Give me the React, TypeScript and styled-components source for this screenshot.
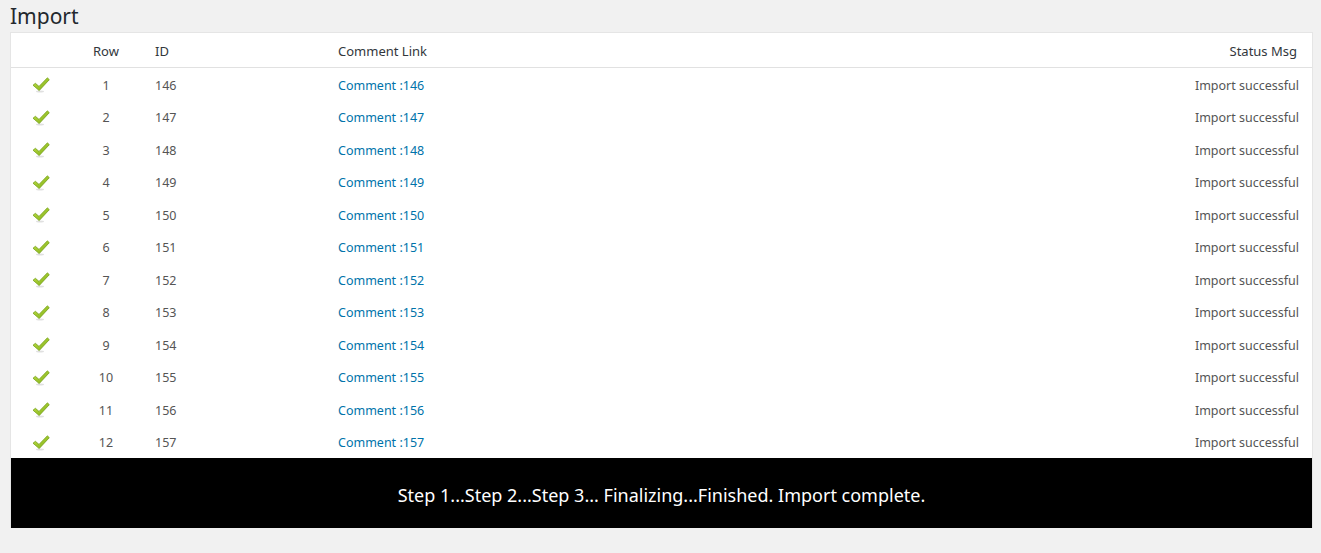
import { FC } from "react";
import styled, { createGlobalStyle } from "styled-components";

const GlobalStyle = createGlobalStyle`
  html, body {
    margin: 0;
    padding: 0;
    background: #f1f1f1;
    font-family: "Noto Sans", "Open Sans", sans-serif;
  }
`;

const rows = Array.from({ length: 12 }, (_, i) => ({ row: i + 1, id: 146 + i }));

const CheckIcon: FC = () => (
  <svg width="18" height="16" viewBox="0 0 18 16">
    <defs>
      <linearGradient id="chk" x1="0" y1="0" x2="1" y2="1">
        <stop offset="0" stopColor="#c4e34a" />
        <stop offset="1" stopColor="#7aab12" />
      </linearGradient>
    </defs>
    <ellipse cx="8" cy="14.6" rx="4" ry="1" fill="#000" opacity="0.12" />
    <path
      d="M1 8.2 L3.4 6.3 L7 9.4 L15.4 0.8 L17.3 2.7 L7.2 13.6 Z"
      fill="url(#chk)"
      stroke="#6a980c"
      strokeWidth="0.7"
      strokeLinejoin="round"
    />
  </svg>
);

const App: FC = () => (
  <Page>
    <GlobalStyle />
    <Title>Import</Title>
    <Panel>
      <HeaderRow>
        <Cell />
        <Cell $center>Row</Cell>
        <Cell>ID</Cell>
        <Cell>Comment Link</Cell>
        <Cell $right $pr={15}>Status Msg</Cell>
      </HeaderRow>
      <Body>
        {rows.map((r) => (
          <Row key={r.row}>
            <Cell $center $pr={2}>
              <CheckIcon />
            </Cell>
            <Cell $center>{r.row}</Cell>
            <Cell>{r.id}</Cell>
            <Cell>
              <Link href="#">Comment :{r.id}</Link>
            </Cell>
            <Cell $right $pr={13}>Import successful</Cell>
          </Row>
        ))}
      </Body>
      <Footer>Step 1...Step 2...Step 3... Finalizing...Finished. Import complete.</Footer>
    </Panel>
  </Page>
);

export default App;

const Page = styled.div`
  padding: 0 8px 0 10px;
`;

const Title = styled.h1`
  margin: 0;
  font-size: 21px;
  font-weight: 400;
  line-height: 32px;
  color: #23282d;
`;

const Panel = styled.div`
  width: 1303px;
  box-sizing: border-box;
  background: #fff;
  border: 1px solid #e5e5e5;
  border-bottom: none;
`;

const gridCols = "61px 68px 183px 1fr auto";

const HeaderRow = styled.div`
  display: grid;
  grid-template-columns: ${gridCols};
  height: 35px;
  padding-top: 2px;
  box-sizing: border-box;
  align-items: center;
  border-bottom: 1px solid #e1e1e1;
  font-size: 13px;
  color: #32373c;
`;

const Body = styled.div`
  display: flex;
  flex-direction: column;
`;

const Row = styled.div`
  display: grid;
  grid-template-columns: ${gridCols};
  height: 32.5px;
  padding-top: 2px;
  box-sizing: border-box;
  align-items: center;
  font-size: 12.5px;
  color: #555;
`;

const Cell = styled.div<{ $center?: boolean; $right?: boolean; $pr?: number }>`
  display: flex;
  align-items: center;
  justify-content: ${(p) => (p.$center ? "center" : p.$right ? "flex-end" : "flex-start")};
  padding-left: ${(p) => (p.$center || p.$right ? 0 : 15)}px;
  padding-right: ${(p) => p.$pr ?? 0}px;
  white-space: nowrap;
`;

const Link = styled.a`
  color: #0073aa;
  text-decoration: none;
`;

const Footer = styled.div`
  height: 70px;
  background: #000;
  color: #fff;
  font-size: 18px;
  display: flex;
  align-items: center;
  justify-content: center;
  padding-top: 4px;
  box-sizing: border-box;
`;
